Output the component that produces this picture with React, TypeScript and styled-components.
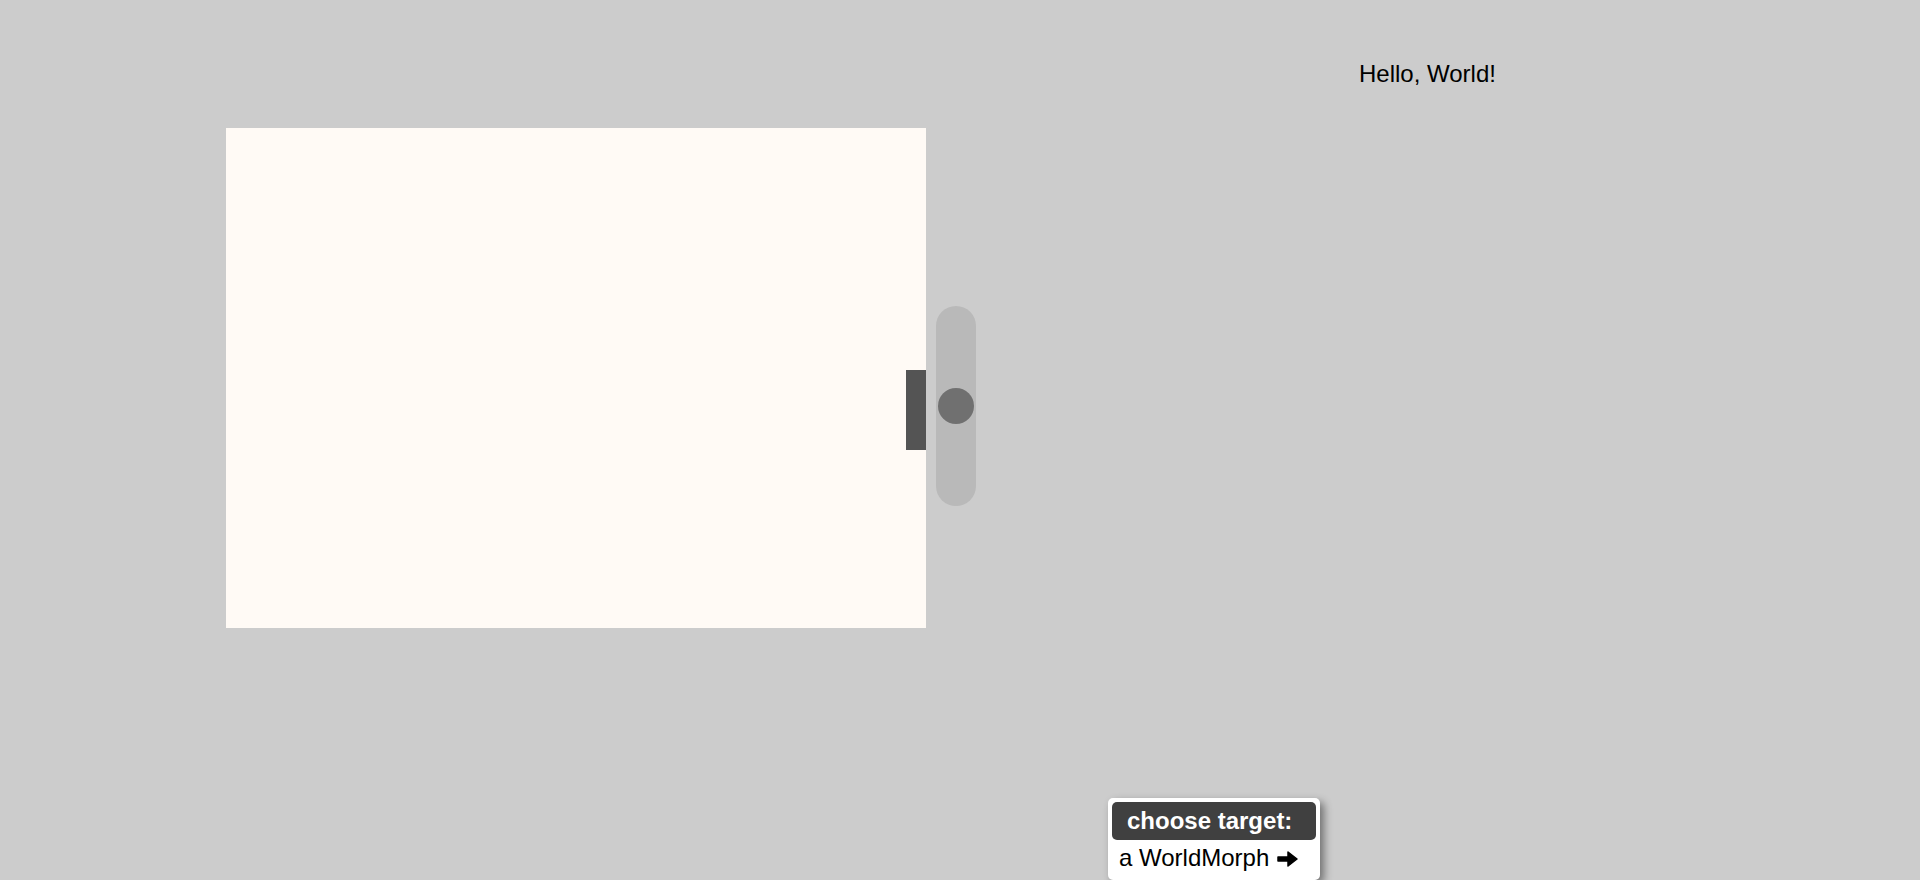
import styled, { createGlobalStyle } from "styled-components";

const GlobalStyle = createGlobalStyle`
  html, body {
    margin: 0;
    padding: 0;
    background: #cccccc;
    font-family: "Liberation Sans", Arial, Helvetica, sans-serif;
  }
`;

// the world is a free canvas: every morph sits at its own place on it
const World = styled.div`
  position: relative;
  width: 1920px;
  height: 880px;
  overflow: hidden;
  background: #cccccc;
`;

const Morph = styled.div<{ $left: number; $top: number }>`
  position: absolute;
  left: ${(p) => p.$left}px;
  top: ${(p) => p.$top}px;
`;

const Greeting = styled(Morph)`
  font-size: 24px;
  line-height: 1.15;
  color: #000;
  white-space: nowrap;
`;

const FrameGroup = styled(Morph)`
  display: flex;
  align-items: flex-start;
  gap: 10px;
`;

const Pane = styled.div`
  width: 700px;
  height: 500px;
  box-sizing: border-box;
  padding-top: 242px;
  background: rgb(255, 250, 245);
  display: flex;
  justify-content: flex-end;
  align-items: flex-start;
`;

const Handle = styled.div`
  width: 20px;
  height: 80px;
  background: rgb(84, 84, 84);
`;

const Slider = styled.div`
  margin-top: 178px;
  width: 40px;
  height: 200px;
  border-radius: 20px;
  background: rgb(185, 185, 185);
  display: flex;
  align-items: center;
  justify-content: center;
`;

const Knob = styled.div`
  width: 36px;
  height: 36px;
  border-radius: 50%;
  background: rgb(112, 112, 112);
`;

const Menu = styled(Morph)`
  width: 212px;
  box-sizing: border-box;
  padding: 4px;
  background: #ffffff;
  border-radius: 5px;
  box-shadow: 4px 4px 8px rgba(0, 0, 0, 0.45);
  display: flex;
  flex-direction: column;
`;

const MenuTitle = styled.div`
  height: 38px;
  box-sizing: border-box;
  padding-left: 15px;
  border-radius: 5px;
  background: rgb(64, 64, 64);
  color: #ffffff;
  font-weight: bold;
  font-size: 24px;
  line-height: 38px;
  white-space: nowrap;
`;

const MenuItem = styled.div`
  height: 36px;
  padding-left: 7px;
  font-size: 24px;
  line-height: 36px;
  color: #000;
  white-space: nowrap;
  display: flex;
  align-items: center;
  gap: 8px;
`;

const Arrow = styled.svg`
  width: 21px;
  height: 18px;
  margin-top: 2px;
`;

export default function App() {
  return (
    <>
      <GlobalStyle />
      <World>
        <Greeting $left={1359} $top={60}>
          Hello, World!
        </Greeting>
        <FrameGroup $left={226} $top={128}>
          <Pane>
            <Handle />
          </Pane>
          <Slider>
            <Knob />
          </Slider>
        </FrameGroup>
        <Menu $left={1108} $top={798}>
          <MenuTitle>choose target:</MenuTitle>
          <MenuItem>
            a WorldMorph
            <Arrow viewBox="0 0 21 18">
              <path
                d="M1 7 H11 V2 L20 9 L11 16 V11 H1 Z"
                fill="#000"
                stroke="#000"
                strokeWidth="1.5"
                strokeLinejoin="round"
              />
            </Arrow>
          </MenuItem>
        </Menu>
      </World>
    </>
  );
}
